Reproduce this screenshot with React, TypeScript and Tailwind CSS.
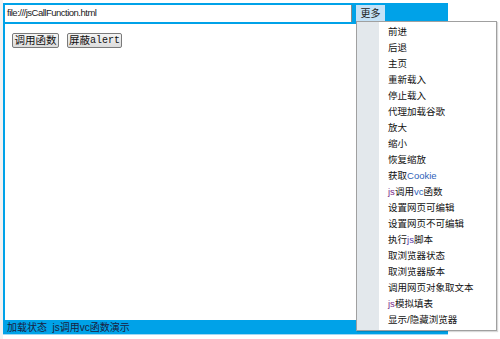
const menuItems: { parts: { t: string; c?: string }[] }[] = [
  { parts: [{ t: '前进' }] },
  { parts: [{ t: '后退' }] },
  { parts: [{ t: '主页' }] },
  { parts: [{ t: '重新载入' }] },
  { parts: [{ t: '停止载入' }] },
  { parts: [{ t: '代理加载谷歌' }] },
  { parts: [{ t: '放大' }] },
  { parts: [{ t: '缩小' }] },
  { parts: [{ t: '恢复缩放' }] },
  { parts: [{ t: '获取' }, { t: 'Cookie', c: 'text-[#2f5fb8]' }] },
  { parts: [{ t: 'js', c: 'text-[#7a2c8c]' }, { t: '调用' }, { t: 'vc', c: 'text-[#2f5fb8]' }, { t: '函数' }] },
  { parts: [{ t: '设置网页可编辑' }] },
  { parts: [{ t: '设置网页不可编辑' }] },
  { parts: [{ t: '执行' }, { t: 'js', c: 'text-[#5a3aa8]' }, { t: '脚本' }] },
  { parts: [{ t: '取浏览器状态' }] },
  { parts: [{ t: '取浏览器版本' }] },
  { parts: [{ t: '调用网页对象取文本' }] },
  { parts: [{ t: 'js', c: 'text-[#7a2c8c]' }, { t: '模拟填表' }] },
  { parts: [{ t: '显示/隐藏浏览器' }] },
];

const font = "font-['Liberation_Sans','Noto_Sans_CJK_SC',sans-serif]";

export default function App() {
  return (
    <div className={`relative h-[339px] w-[500px] overflow-hidden bg-white ${font}`}>
      <div className="flex h-[339px] w-[500px]">
        <div className="w-[3px] bg-[#f2f2f2]" />
        <div className="flex w-[445px] flex-col pt-[3px]">
          {/* address bar */}
          <div className="flex h-[21px] shrink-0 items-start bg-[#00a2e8] pl-[2px] pt-[2px]">
            <div className="flex h-[17px] w-[347px] items-center border-r border-[#8a8a8a] bg-white pl-[2px] text-[9.5px] tracking-[-0.5px] text-[#1a1a1a]">
              file:///jsCallFunction.html
            </div>
            <div className="ml-[4px] flex h-[17px] w-[29px] items-center justify-center bg-[#c4e2f7] text-[10px] text-[#222]">
              更多
            </div>
          </div>
          {/* content */}
          <div className="flex h-[296px] shrink-0 border-l-2 border-[#00a2e8] bg-white">
            <div className="flex h-fit gap-[8px] pl-[7px] pt-[9px]">
              <button className="flex h-[15px] w-[47px] items-center justify-center rounded-[2px] border border-[#7a7a7a] bg-gradient-to-b from-[#f4f4f4] to-[#dcdcdc] text-[10.5px] leading-none text-[#111]">
                调用函数
              </button>
              <button className="flex h-[15px] w-[55px] items-center justify-center rounded-[2px] border border-[#7a7a7a] bg-gradient-to-b from-[#f4f4f4] to-[#dcdcdc] text-[10.5px] leading-none text-[#111]">
                <span className="flex items-center">
                  <span>屏蔽</span>
                  <span className="font-['Liberation_Mono',monospace] text-[10px] leading-none">alert</span>
                </span>
              </button>
            </div>
          </div>
          {/* status bar */}
          <div className="flex h-[14px] shrink-0 items-center bg-[#00a2e8] pl-[4px] text-[10px] text-[#1a2040]">
            加载状态&nbsp;&nbsp;js调用vc函数演示
          </div>
          <div className="h-[1px] shrink-0 bg-[#9fd8f3]" />
          <div className="flex-1 bg-white" />
        </div>
        <div className="flex-1 bg-white" />
      </div>

      {/* popup menu */}
      <div className="absolute left-[356px] top-[21px] flex h-[310px] w-[141px] border border-[#a0a0a0] bg-white shadow-[1px_1px_1px_rgba(0,0,0,0.15)]">
        <div className="w-[22px] bg-[#e3e8ec]" />
        <div className="flex flex-col pl-[9px] pt-[2px]">
          {menuItems.map((item, i) => (
            <div key={i} className="flex h-[16px] items-center text-[9.5px] text-[#111]">
              {item.parts.map((p, j) => (
                <span key={j} className={p.c}>
                  {p.t}
                </span>
              ))}
            </div>
          ))}
        </div>
      </div>
    </div>
  );
}
